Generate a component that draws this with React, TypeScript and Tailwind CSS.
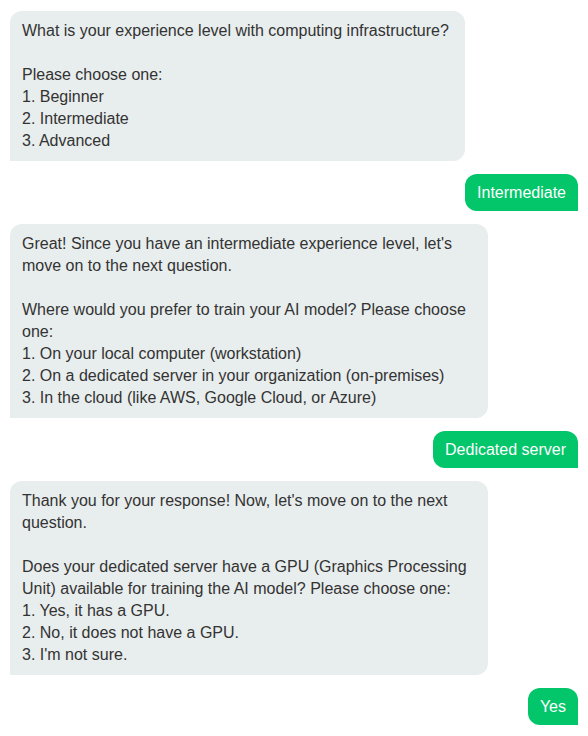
import React from "react";

type Msg = { from: "bot" | "user"; lines?: string[]; text?: string; wide?: boolean };

const messages: Msg[] = [
  {
    from: "bot",
    lines: [
      "What is your experience level with computing infrastructure?",
      "",
      "Please choose one:",
      "1. Beginner",
      "2. Intermediate",
      "3. Advanced",
    ],
  },
  { from: "user", text: "Intermediate" },
  {
    from: "bot",
    wide: true,
    lines: [
      "Great! Since you have an intermediate experience level, let's",
      "move on to the next question.",
      "",
      "Where would you prefer to train your AI model? Please choose",
      "one:",
      "1. On your local computer (workstation)",
      "2. On a dedicated server in your organization (on-premises)",
      "3. In the cloud (like AWS, Google Cloud, or Azure)",
    ],
  },
  { from: "user", text: "Dedicated server" },
  {
    from: "bot",
    wide: true,
    lines: [
      "Thank you for your response! Now, let's move on to the next",
      "question.",
      "",
      "Does your dedicated server have a GPU (Graphics Processing",
      "Unit) available for training the AI model? Please choose one:",
      "1. Yes, it has a GPU.",
      "2. No, it does not have a GPU.",
      "3. I'm not sure.",
    ],
  },
  { from: "user", text: "Yes" },
];

export default function App() {
  return (
    <div
      className="w-[588px] h-[736px] bg-white overflow-hidden flex flex-col gap-[13px] px-[10px] pt-[11px] text-[16px] leading-[22px] text-[#333333]"
      style={{ fontFamily: '"Liberation Sans", Arial, Helvetica, sans-serif' }}
    >
      {messages.map((m, i) =>
        m.from === "bot" ? (
          <div
            key={i}
            className={
              "self-start bg-[#e8eded] rounded-tl-[12px] rounded-tr-[12px] rounded-br-[12px] rounded-bl-none px-[12px] py-[9px] " +
              (m.wide ? "w-[478px]" : "w-[455px]")
            }
          >
            {m.lines!.map((l, j) => (
              <div key={j} className="whitespace-nowrap h-[22px]">
                {l}
              </div>
            ))}
          </div>
        ) : (
          <div
            key={i}
            className="self-end bg-[#03c66a] text-white rounded-tl-[12px] rounded-tr-[12px] rounded-bl-[12px] rounded-br-none px-[12px] py-[7.5px] whitespace-nowrap"
          >
            {m.text}
          </div>
        )
      )}
    </div>
  );
}
